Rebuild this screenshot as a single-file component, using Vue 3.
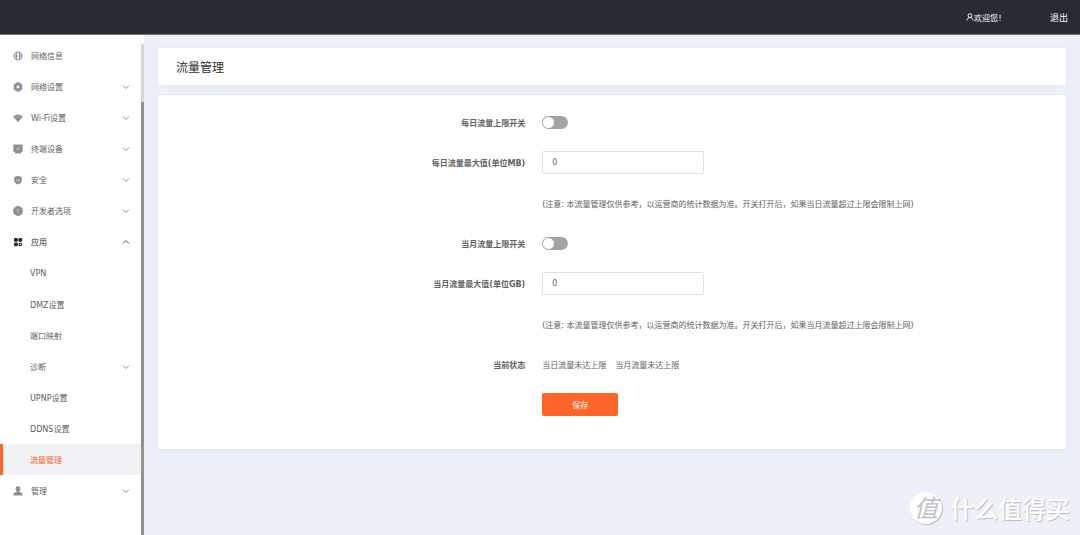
<script setup>
import { ref } from 'vue'

const menu = [
  { label: '网络信息', icon: 'globe' },
  { label: '网络设置', icon: 'gear', arrow: 'down' },
  { label: 'Wi-Fi设置', icon: 'wifi', arrow: 'down' },
  { label: '终端设备', icon: 'device', arrow: 'down' },
  { label: '安全', icon: 'shield', arrow: 'down' },
  { label: '开发者选项', icon: 'info', arrow: 'down' },
  { label: '应用', icon: 'apps', arrow: 'up', open: true },
  { label: 'VPN', sub: true },
  { label: 'DMZ设置', sub: true },
  { label: '端口映射', sub: true },
  { label: '诊断', sub: true, arrow: 'down' },
  { label: 'UPNP设置', sub: true },
  { label: 'DDNS设置', sub: true },
  { label: '流量管理', sub: true, active: true },
  { label: '管理', icon: 'user', arrow: 'down' },
]

const dailyOn = ref(false)
const monthlyOn = ref(false)
const dailyMax = ref('0')
const monthlyMax = ref('0')
</script>

<template>
  <div class="page">
    <header class="topbar">
      <span class="welcome">
        <svg class="person" viewBox="0 0 8 8" aria-hidden="true">
          <circle cx="4" cy="2.6" r="1.9" />
          <path d="M0.8 7.6C1 5.6 2.2 4.6 4 4.6S7 5.6 7.2 7.6" />
        </svg>欢迎您！
      </span>
      <a class="logout" href="#">退出</a>
    </header>

    <div class="body">
      <aside class="sidebar">
        <nav class="menu">
          <a
            v-for="item in menu"
            :key="item.label"
            href="#"
            class="item"
            :class="{ sub: item.sub, active: item.active, open: item.open }"
          >
            <svg v-if="item.icon" class="icon" viewBox="0 0 10 10" aria-hidden="true">
              <g v-if="item.icon === 'globe'" class="line">
                <circle cx="5" cy="5" r="3.9" />
                <ellipse cx="5" cy="5" rx="1.7" ry="3.9" />
                <path d="M1 5H9" />
                <path class="cut" d="M5 0V10" />
              </g>
              <g v-else-if="item.icon === 'gear'">
                <path d="M3.8 0.3H6.2L7 1.5L8.4 1.6L9.6 3.7L8.9 5L9.6 6.3L8.4 8.4L7 8.5L6.2 9.7H3.8L3 8.5L1.6 8.4L0.4 6.3L1.1 5L0.4 3.7L1.6 1.6L3 1.5Z" />
                <circle class="hole" cx="5" cy="5" r="1.4" />
              </g>
              <g v-else-if="item.icon === 'wifi'">
                <path d="M5 9L0.1 3.7C3 0.9 7 0.9 9.9 3.7Z" />
                <path class="gap" d="M1.3 4.8C3.5 2.9 6.5 2.9 8.7 4.8" />
              </g>
              <g v-else-if="item.icon === 'device'">
                <rect x="0.3" y="0.6" width="9.4" height="7.6" rx="1.2" />
                <rect x="2" y="8" width="6" height="1.5" rx="0.5" />
                <path class="mark" d="M3.4 4.5L4.7 5.5L6.7 3.8" />
              </g>
              <g v-else-if="item.icon === 'shield'">
                <path d="M5 0.8L8.8 2V5.2C8.8 7.4 7 8.9 5 9.6C3 8.9 1.2 7.4 1.2 5.2V2Z" />
                <path class="mark" d="M3.3 4.9L4.6 6L6.8 4.2" />
              </g>
              <g v-else-if="item.icon === 'info'">
                <circle cx="5" cy="5" r="4.9" />
                <path class="mark" d="M5 2.7V5.6M5 6.5V7.2" />
              </g>
              <g v-else-if="item.icon === 'apps'">
                <rect x="1" y="1" width="3.8" height="3.8" rx="1.3" />
                <rect x="5.4" y="1" width="3.8" height="3.8" rx="1.3" />
                <rect x="1" y="5.4" width="3.8" height="3.8" rx="1.3" />
                <circle class="ring" cx="7.3" cy="7.3" r="1.3" />
              </g>
              <g v-else>
                <ellipse cx="5" cy="3" rx="2.4" ry="2.7" />
                <path d="M3.8 4.5H6.2V6C8.6 6.3 9.7 7.2 9.8 9.5H0.2C0.3 7.2 1.4 6.3 3.8 6Z" />
              </g>
            </svg>
            <span class="text">{{ item.label }}</span>
            <svg v-if="item.arrow" class="arrow" viewBox="0 0 8 6" aria-hidden="true">
              <path :d="item.arrow === 'up' ? 'M1 4.5L4 1.5L7 4.5' : 'M1 1.5L4 4.5L7 1.5'" />
            </svg>
          </a>
        </nav>
        <div class="scrollbar"><div class="thumb"></div></div>
      </aside>

      <main class="content">
        <section class="card heading"><h1>流量管理</h1></section>

        <form class="card form" @submit.prevent>
          <div class="row">
            <label for="daily-on">每日流量上限开关</label>
            <input id="daily-on" v-model="dailyOn" class="switch" type="checkbox" role="switch" />
          </div>
          <div class="row">
            <label for="daily-max">每日流量最大值(单位MB)</label>
            <input id="daily-max" v-model="dailyMax" class="box" type="text" />
          </div>
          <div class="row note">
            <p>(注意: 本流量管理仅供参考，以运营商的统计数据为准。开关打开后，如果当日流量超过上限会限制上网)</p>
          </div>
          <div class="row">
            <label for="monthly-on">当月流量上限开关</label>
            <input id="monthly-on" v-model="monthlyOn" class="switch" type="checkbox" role="switch" />
          </div>
          <div class="row">
            <label for="monthly-max">当月流量最大值(单位GB)</label>
            <input id="monthly-max" v-model="monthlyMax" class="box" type="text" />
          </div>
          <div class="row note">
            <p>(注意: 本流量管理仅供参考，以运营商的统计数据为准。开关打开后，如果当月流量超过上限会限制上网)</p>
          </div>
          <div class="row">
            <span class="name">当前状态</span>
            <p class="status"><span>当日流量未达上限</span><span>当月流量未达上限</span></p>
          </div>
          <div class="row">
            <button class="save" type="submit">保存</button>
          </div>
        </form>
      </main>
    </div>

    <div class="watermark">
      <span class="seal">值</span>
      <span>什么值得买</span>
    </div>
  </div>
</template>

<style>
body {
  background: #eef0f9;
}
</style>

<style scoped>
.page {
  position: relative;
  display: flex;
  flex-direction: column;
  min-height: 100vh;
  font-family: "DejaVu Sans", "Noto Sans CJK SC", sans-serif;
  font-size: 8px;
  color: #606266;
  background: #eef0f9;
}
.page * {
  box-sizing: border-box;
}
a {
  color: inherit;
  text-decoration: none;
}
.topbar {
  display: flex;
  align-items: center;
  justify-content: flex-end;
  gap: 44px;
  height: 35px;
  padding-right: 12px;
  color: #fff;
  background: #282b33;
  border-bottom: 1px solid #6d7078;
}
.welcome {
  display: flex;
  align-items: center;
}
.person {
  width: 8px;
  height: 8px;
  fill: none;
  stroke: #fff;
  stroke-width: 0.9;
}
.logout {
  font-size: 9px;
}
.body {
  display: flex;
  flex: 1;
}
.sidebar {
  display: flex;
  flex: 0 0 144px;
  background: #fff;
}
.menu {
  flex: 1;
  padding-top: 5px;
}
.item {
  display: flex;
  align-items: center;
  height: 31px;
  padding: 0 11px 0 13px;
}
.icon {
  width: 10px;
  height: 10px;
  margin-right: 8px;
  fill: #8d9196;
}
.line {
  fill: none;
  stroke: #8d9196;
  stroke-width: 1.1;
}
.cut {
  stroke: #fff;
  stroke-width: 0.8;
}
.hole {
  fill: #fff;
}
.gap {
  fill: none;
  stroke: #c9cbce;
  stroke-width: 0.5;
}
.mark {
  fill: none;
  stroke: #e4e6e8;
  stroke-width: 0.8;
}
.text {
  flex: 1;
}
.arrow {
  width: 8px;
  height: 6px;
  fill: none;
  stroke: #909399;
  stroke-width: 1;
}
.open {
  margin-bottom: 1px;
  color: #303133;
}
.open .icon {
  fill: #202329;
}
.open .arrow {
  stroke: #404348;
}
.ring {
  fill: none;
  stroke: #202329;
  stroke-width: 1.1;
}
.sub {
  padding-left: 30px;
}
.active {
  padding-left: 27px;
  color: #ff6428;
  background: #f0f1f5;
  border-left: 3px solid #ff6428;
}
.scrollbar {
  width: 3px;
  margin-top: 9px;
  padding-top: 58px;
  background: #d6d6d6;
}
.thumb {
  height: 100%;
  background: #95918d;
}
.content {
  flex: 1;
  padding: 13px 14px;
}
.card {
  background: #fff;
  box-shadow: 0 1px 6px rgba(90, 105, 150, 0.08);
}
.heading {
  padding: 3px 18px 0;
}
h1 {
  margin: 0;
  font-size: 12px;
  font-weight: 400;
  line-height: 34px;
  color: #303133;
}
.form {
  display: flex;
  flex-direction: column;
  gap: 17px;
  margin-top: 10px;
  padding: 16px 18px 33px;
}
.row {
  display: grid;
  grid-template-columns: 42% 1fr;
  align-items: center;
  min-height: 23px;
}
.note {
  min-height: 24px;
}
.row > :last-child {
  grid-column: 2;
}
label,
.name {
  padding-right: 17px;
  font-weight: 700;
  text-align: right;
}
p {
  margin: 0;
}
.status {
  display: flex;
  gap: 9px;
}
.switch {
  appearance: none;
  display: flex;
  width: 26px;
  height: 13px;
  margin: 0;
  padding: 1px;
  border-radius: 7px;
  background: #a3a3a3;
}
.switch::before {
  content: "";
  width: 11px;
  height: 11px;
  border-radius: 50%;
  background: #fff;
}
.switch:checked {
  justify-content: flex-end;
  background: #ff6428;
}
.box {
  width: 162px;
  height: 23px;
  padding: 0 9px;
  font: inherit;
  color: inherit;
  background: #fff;
  border: 1px solid #dfe1e6;
  border-radius: 2px;
}
.save {
  width: 76px;
  height: 23px;
  padding: 0;
  font: inherit;
  color: #fff;
  background: #ff6428;
  border: 0;
  border-radius: 2px;
}
.watermark {
  position: absolute;
  right: 10px;
  bottom: 11px;
  display: flex;
  align-items: center;
  gap: 8px;
  font-family: "Noto Sans CJK SC", sans-serif;
  font-size: 24px;
  font-weight: 500;
  line-height: 30px;
  color: #fff;
  text-shadow: 1px 1px 1px #b9bbc3;
  pointer-events: none;
}
.seal {
  width: 32px;
  height: 32px;
  font-style: italic;
  font-weight: 400;
  text-align: center;
  color: #c0c2ca;
  text-shadow: none;
  background: #fff;
  border-radius: 50%;
  box-shadow: 1px 1px 1px #b9bbc3;
}
</style>
